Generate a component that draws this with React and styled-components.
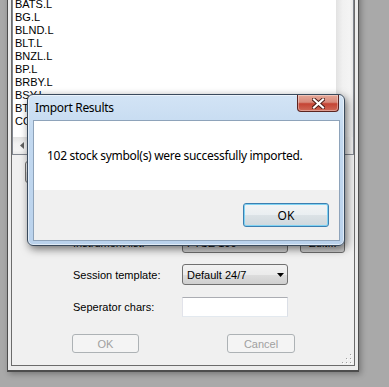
import React from 'react'
import styled, { createGlobalStyle } from 'styled-components'

const GlobalStyle = createGlobalStyle`
  html, body {
    margin: 0;
    padding: 0;
  }
  body {
    width: 389px;
    height: 387px;
    overflow: hidden;
    background: #a9a9a9;
    font-family: "Liberation Sans", Arial, sans-serif;
  }
`

const Desktop = styled.div`
  position: relative;
  width: 389px;
  height: 387px;
  overflow: hidden;
  background: #a9a9a9;
`

/* parent dialog (the importer) */
const ParentWindow = styled.div`
  position: absolute;
  left: 7px;
  top: -8px;
  width: 352px;
  height: 380px;
  box-sizing: border-box;
  border: 1px solid #4d4d4d;
  border-bottom-width: 2px;
  padding: 3px 3px 4px 3px;
  background: #ececec;
  box-shadow: 2px 2px 6px rgba(0, 0, 0, 0.3);
  display: flex;
  flex-direction: column;
`

const Client = styled.div`
  position: relative;
  flex: 1;
  min-height: 0;
  display: flex;
  flex-direction: column;
  background: #f0f0f0;
  border: 1px solid #6b6b6b;
  font-size: 11px;
  color: #000;
`

const ListBox = styled.div`
  height: 158px;
  box-sizing: border-box;
  border: 1px solid #828790;
  background: #fff;
  display: grid;
  grid-template-columns: 1fr 17px;
  grid-template-rows: 1fr 17px;
  overflow: hidden;
`

const Items = styled.div`
  padding-left: 2px;
  overflow: hidden;
`

const Item = styled.div`
  height: 13px;
  line-height: 13px;
  font-size: 11px;
  white-space: nowrap;
`

const VScroll = styled.div`
  background: linear-gradient(to right, #e2e2e2, #f1f1f1 40%, #f4f4f4 80%, #e8e8e8);
`

const HScroll = styled.div`
  display: flex;
  background: linear-gradient(to bottom, #e3e3e3, #f2f2f2 40%, #f4f4f4 80%, #e9e9e9);
`

const ArrowButton = styled.div`
  width: 17px;
  height: 17px;
  display: flex;
  align-items: center;
  justify-content: center;
`

const Corner = styled.div`
  background: #f0f0f0;
`

const ToolRow = styled.div`
  display: flex;
  margin-top: 6px;
  padding-left: 13px;
`

const Button = styled.div`
  box-sizing: border-box;
  width: ${p => p.$w || 75}px;
  height: ${p => p.$h || 22}px;
  border: 1px solid ${p => (p.$disabled ? '#adb2b5' : '#707070')};
  border-radius: 3px;
  background: ${p =>
    p.$disabled
      ? '#f4f4f4'
      : 'linear-gradient(#f2f2f2 0%, #ebebeb 50%, #dddddd 51%, #cfcfcf 100%)'};
  color: ${p => (p.$disabled ? '#a0a0a0' : '#000')};
  display: flex;
  align-items: center;
  justify-content: center;
  font-size: 11px;
`

const Form = styled.div`
  display: grid;
  grid-template-columns: 109px 106px 57px;
  grid-auto-rows: 21px;
  row-gap: 11px;
  align-items: center;
  padding-left: 61px;
  margin-top: 49px;
`

const Label = styled.div`
  font-size: 11px;
  white-space: nowrap;
`

const Combo = styled.div`
  box-sizing: border-box;
  height: 21px;
  border: 1px solid #707070;
  border-radius: 3px;
  background: linear-gradient(#f2f2f2 0%, #ebebeb 50%, #dddddd 51%, #cfcfcf 100%);
  display: flex;
  align-items: center;
  justify-content: space-between;
  padding: 0 3px 0 4px;
  font-size: 11px;
`

const TextBox = styled.div`
  box-sizing: border-box;
  height: 20px;
  border: 1px solid;
  border-color: #abadb3 #dbdfe6 #e3e9ef #e2e3ea;
  background: #fff;
`

const BrowseButton = styled(Button)`
  margin-left: 12px;
`

const ButtonRow = styled.div`
  display: flex;
  gap: 88px;
  padding-left: 60px;
  margin-top: 17px;
`

const Grip = styled.svg`
  position: absolute;
  right: 2px;
  bottom: 1px;
`

/* message box */
const Dialog = styled.div`
  position: absolute;
  left: 27px;
  top: 94px;
  width: 318px;
  height: 152px;
  box-sizing: border-box;
  border: 1px solid #3a4a5c;
  border-radius: 6px;
  padding: 0 4px 4px 5px;
  background: linear-gradient(to bottom, #d3e4f5 0%, #c3d9f0 25%, #bad2ec 100%);
  box-shadow: inset 0 0 0 1px rgba(255, 255, 255, 0.55), 2px 3px 8px rgba(0, 0, 0, 0.55);
  display: flex;
  flex-direction: column;
  font-family: "Noto Sans", "Liberation Sans", sans-serif;
`

const TitleBar = styled.div`
  height: 25px;
  line-height: 25px;
  padding-left: 2px;
  font-size: 12px;
  letter-spacing: -0.3px;
  color: #000;
`

const CloseButton = styled.div`
  position: absolute;
  top: 0;
  right: 5px;
  width: 42px;
  height: 17px;
  box-sizing: border-box;
  border: 1px solid #5b2420;
  border-top: none;
  border-radius: 0 0 4px 4px;
  background: linear-gradient(#e6a898 0%, #d88a7b 45%, #c54434 55%, #cf6a58 100%);
  box-shadow: inset 0 0 0 1px rgba(255, 255, 255, 0.35);
  display: flex;
  align-items: center;
  justify-content: center;
`

const DialogClient = styled.div`
  flex: 1;
  display: flex;
  flex-direction: column;
  border: 1px solid #8ea3ba;
`

const Message = styled.div`
  height: 69px;
  display: flex;
  align-items: center;
  padding-left: 13px;
  background: #fff;
  font-size: 12px;
  letter-spacing: -0.3px;
  color: #000;
`

const ButtonBar = styled.div`
  flex: 1;
  display: flex;
  align-items: center;
  justify-content: flex-end;
  padding-right: 10px;
  background: #f0f0f0;
`

const DefaultButton = styled.div`
  box-sizing: border-box;
  width: 86px;
  height: 24px;
  border: 1px solid #3c7fb1;
  border-radius: 3px;
  background: linear-gradient(#f2f4f5 0%, #e9eef1 50%, #dbe2e6 51%, #cfd8dd 100%);
  box-shadow: inset 0 0 0 1px #7fd2f2;
  display: flex;
  align-items: center;
  justify-content: center;
  font-size: 12px;
  color: #000;
`

const symbols = ['BATS.L', 'BG.L', 'BLND.L', 'BLT.L', 'BNZL.L', 'BP.L', 'BRBY.L', 'BSY.L', 'BT-A.L', 'COB.L']

const DownArrow = () => (
  <svg width="7" height="4" viewBox="0 0 7 4">
    <polygon points="0,0 7,0 3.5,4" fill="#000" />
  </svg>
)

const App = () => (
  <Desktop>
    <GlobalStyle />
    <ParentWindow>
      <Client>
        <ListBox>
          <Items>
            {symbols.map(s => (
              <Item key={s}>{s}</Item>
            ))}
          </Items>
          <VScroll />
          <HScroll>
            <ArrowButton>
              <svg width="4" height="7" viewBox="0 0 4 7">
                <polygon points="4,0 4,7 0,3.5" fill="#606060" />
              </svg>
            </ArrowButton>
          </HScroll>
          <Corner />
        </ListBox>

        <ToolRow>
          <Button $w={75}>Import</Button>
        </ToolRow>

        <Form>
          <Label>Instrument list:</Label>
          <Combo>
            <span>FTSE 100</span>
            <DownArrow />
          </Combo>
          <BrowseButton $w={45} $h={21}>Edit...</BrowseButton>

          <Label>Session template:</Label>
          <Combo>
            <span>Default 24/7</span>
            <DownArrow />
          </Combo>
          <div />

          <Label>Seperator chars:</Label>
          <TextBox />
          <div />
        </Form>

        <ButtonRow>
          <Button $disabled $w={67} $h={19}>OK</Button>
          <Button $disabled $w={68} $h={19}>Cancel</Button>
        </ButtonRow>

        <Grip width="10" height="10" viewBox="0 0 10 10">
          <g fill="#fff">
            <rect x="9" y="1" width="1" height="1" />
            <rect x="9" y="5" width="1" height="1" />
            <rect x="5" y="5" width="1" height="1" />
            <rect x="9" y="9" width="1" height="1" />
            <rect x="5" y="9" width="1" height="1" />
            <rect x="1" y="9" width="1" height="1" />
          </g>
          <g fill="#a0a0a0">
            <rect x="8" y="0" width="1" height="1" />
            <rect x="8" y="4" width="1" height="1" />
            <rect x="4" y="4" width="1" height="1" />
            <rect x="8" y="8" width="1" height="1" />
            <rect x="4" y="8" width="1" height="1" />
            <rect x="0" y="8" width="1" height="1" />
          </g>
        </Grip>
      </Client>
    </ParentWindow>

    <Dialog>
      <TitleBar>Import Results</TitleBar>
      <CloseButton>
        <svg width="13" height="11" viewBox="0 0 13 11">
          <path d="M2 1.5 L11 9.5 M11 1.5 L2 9.5" stroke="#4a1a14" strokeWidth="4" strokeLinecap="square" />
          <path d="M2 1.5 L11 9.5 M11 1.5 L2 9.5" stroke="#fff" strokeWidth="2.2" strokeLinecap="square" />
        </svg>
      </CloseButton>
      <DialogClient>
        <Message>102 stock symbol(s) were successfully imported.</Message>
        <ButtonBar>
          <DefaultButton>OK</DefaultButton>
        </ButtonBar>
      </DialogClient>
    </Dialog>
  </Desktop>
)

export default App
